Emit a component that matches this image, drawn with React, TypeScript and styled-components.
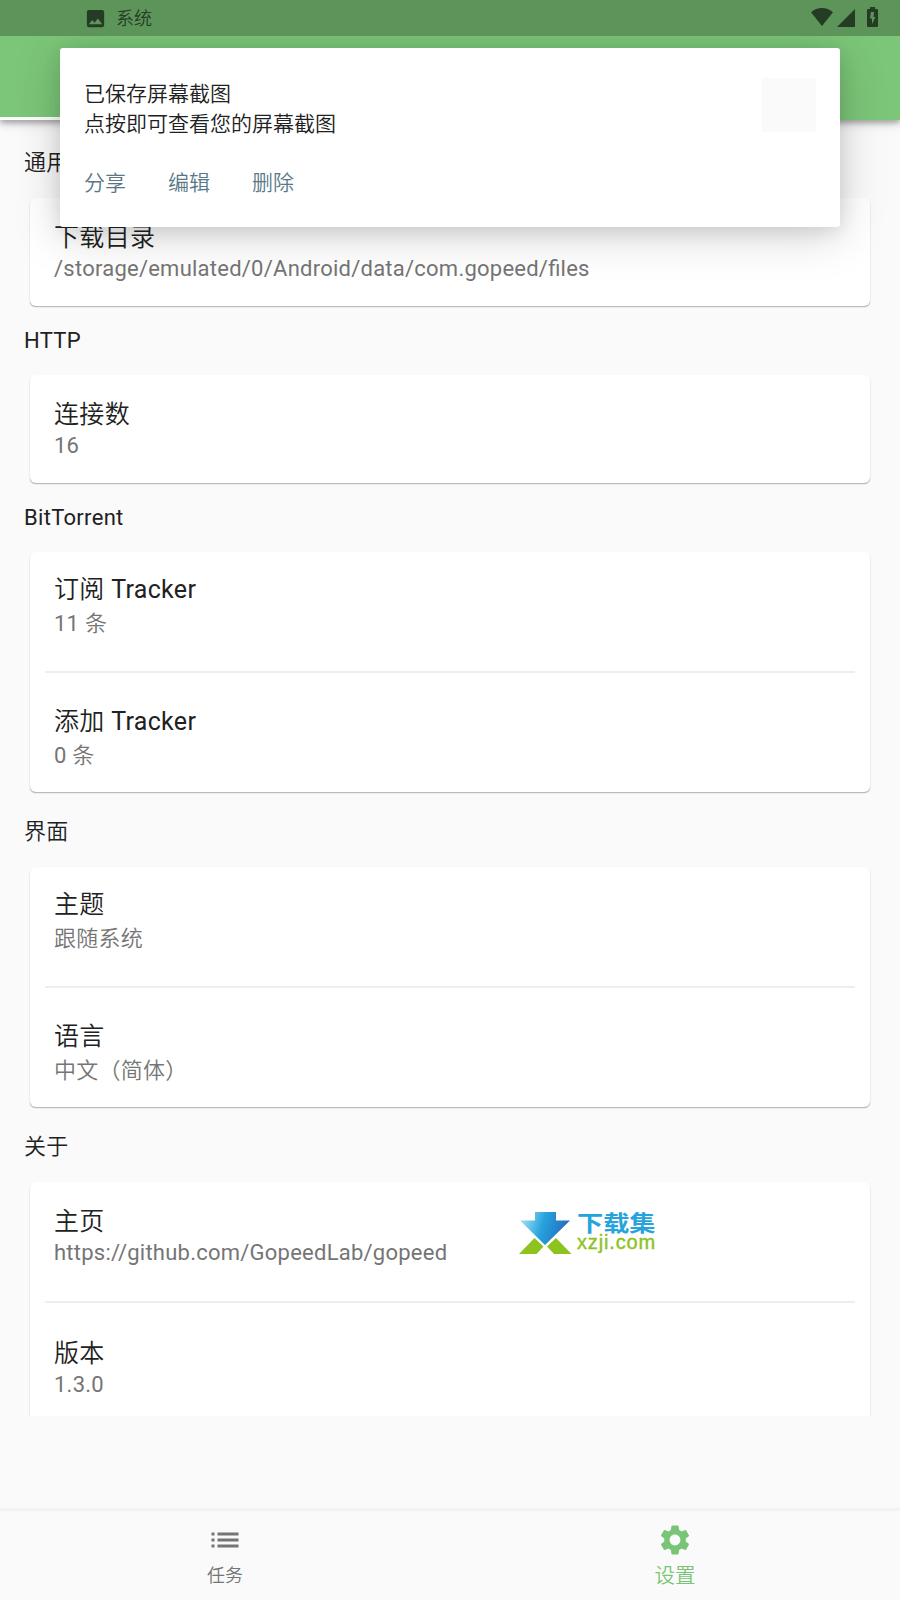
import React from 'react';
import styled, { createGlobalStyle } from 'styled-components';
import { MdImage, MdList, MdSettings } from 'react-icons/md';

const GlobalStyle = createGlobalStyle`
  * { box-sizing: border-box; }
  body {
    margin: 0;
    background: #fafafa;
    font-family: Roboto, "Noto Sans CJK SC", sans-serif;
  }
`;

const Screen = styled.div`
  position: relative;
  display: flex;
  flex-direction: column;
  width: 900px;
  height: 1600px;
  overflow: hidden;
  background: #fafafa;
  color: #212121;
`;

const StatusBar = styled.header`
  display: flex;
  flex: none;
  align-items: center;
  justify-content: space-between;
  height: 36px;
  padding: 0 22px 0 84px;
  background: #5c945a;
  color: #243c24;
  position: relative;
  z-index: 4;
`;

const StatusNote = styled.div`
  display: flex;
  align-items: center;
  gap: 9px;
  font-size: 18px;
  font-weight: 350;
  line-height: 37px;
  svg { width: 23px; height: 23px; }
`;

const StatusIcons = styled.div`
  display: flex;
  align-items: flex-end;
  height: 18px;
  svg { display: block; }
`;

const WifiIcon = styled.svg`
  margin-bottom: 1px;
`;

const SignalIcon = styled.svg`
  margin: 0 12px 0 4px;
`;

const AppBar = styled.div`
  display: flex;
  flex: none;
  align-items: flex-end;
  height: 84px;
  background: #7bc678;
  box-shadow: 0 3px 5px rgba(0, 0, 0, 0.26), 0 5px 10px rgba(0, 0, 0, 0.12);
  position: relative;
  z-index: 1;
`;

const TabIndicator = styled.span`
  width: 180px;
  height: 3px;
  background: #fff;
`;

const Content = styled.main`
  flex: none;
  height: 1296px;
  padding: 0 30px;
  overflow: hidden;
`;

const SectionTitle = styled.h2<{ $height: number; $cjk: boolean }>`
  display: flex;
  align-items: flex-end;
  height: ${(p) => p.$height}px;
  margin: 0 -6px;
  padding-bottom: ${(p) => (p.$cjk ? 20.5 : 19)}px;
  font-size: 22px;
  font-weight: ${(p) => (p.$cjk ? 350 : 400)};
  line-height: 30px;
  letter-spacing: 0.3px;
`;

const Card = styled.section`
  border-radius: 6px;
  background: #fff;
  box-shadow: 0 1.5px 1px -0.5px rgba(0, 0, 0, 0.2), 0 1px 2px rgba(0, 0, 0, 0.12);
`;

const Row = styled.div<{ $cjk?: boolean }>`
  height: 108px;
  padding: ${(p) => (p.$cjk ? 23 : 25)}px 24px 0;
`;

const RowTitle = styled.div`
  height: 30px;
  font-size: 25px;
  line-height: 30px;
  letter-spacing: 0.32px;
`;

const RowValue = styled.div<{ $cjk?: boolean }>`
  margin-top: ${(p) => (p.$cjk ? 4 : 1)}px;
  color: #757575;
  font-size: 22px;
  line-height: 30px;
  letter-spacing: 0.24px;
  font-feature-settings: "liga" 1;
`;

const Han = styled.span`
  font-weight: 350;
`;

const Divider = styled.hr`
  height: 2px;
  margin: 11px 15px;
  border: 0;
  background: #eee;
`;

const NavBar = styled.nav`
  display: flex;
  height: 92px;
  margin-top: auto;
  border-top: 3px solid #f3f3f3;
`;

const NavItem = styled.div<{ $active?: boolean }>`
  display: flex;
  flex: 1;
  flex-direction: column;
  align-items: center;
  padding-top: 11px;
  color: ${(p) => (p.$active ? '#79c576' : '#757575')};
  font-size: ${(p) => (p.$active ? 20.5 : 18)}px;
  font-weight: 350;
  line-height: 36px;
  svg { width: 36px; height: 36px; flex: none; }
`;

const Popup = styled.aside`
  position: absolute;
  z-index: 3;
  top: 48px;
  left: 60px;
  display: flex;
  justify-content: space-between;
  width: 780px;
  height: 179px;
  padding: 30px 24px 0;
  border-radius: 3px;
  background: #fff;
  box-shadow: 0 8px 48px rgba(0, 0, 0, 0.18), 0 4px 18px rgba(0, 0, 0, 0.1);
`;

const PopupText = styled.div`
  padding-top: 1px;
  font-size: 21px;
  font-weight: 350;
  line-height: 30px;
`;

const Actions = styled.div`
  display: flex;
  gap: 42px;
  margin-top: 29px;
  color: #587888;
`;

const Preview = styled.div`
  width: 54px;
  height: 54px;
  background: #fafafa;
`;

const Watermark = styled.div`
  position: absolute;
  z-index: 2;
  top: 1209px;
  left: 518px;
  display: flex;
  gap: 5px;
`;

const Brand = styled.div`
  width: 80px;
  padding-top: 4px;
`;

const BrandName = styled.div`
  height: 21px;
  color: #26a3dc;
  font-size: 22px;
  font-weight: 700;
  line-height: 21px;
  white-space: nowrap;
  transform: scaleX(1.19);
  transform-origin: left;
`;

const BrandSite = styled.div`
  color: #8dc21f;
  font-family: "Liberation Sans", sans-serif;
  font-size: 20px;
  line-height: 17px;
  letter-spacing: 0.85px;
  -webkit-text-stroke: 0.4px #8dc21f;
`;

type Item = { title: string; value: string };
type Section = { name: string; height: number; items: Item[] };

const sections: Section[] = [
  { name: '通用', height: 78, items: [{ title: '下载目录', value: '/storage/emulated/0/Android/data/com.gopeed/files' }] },
  { name: 'HTTP', height: 69, items: [{ title: '连接数', value: '16' }] },
  { name: 'BitTorrent', height: 69, items: [{ title: '订阅 Tracker', value: '11 条' }, { title: '添加 Tracker', value: '0 条' }] },
  { name: '界面', height: 75, items: [{ title: '主题', value: '跟随系统' }, { title: '语言', value: '中文（简体）' }] },
  { name: '关于', height: 75, items: [{ title: '主页', value: 'https://github.com/GopeedLab/gopeed' }, { title: '版本', value: '1.3.0' }] },
];

const hasCjk = (s: string) => /[\u4e00-\u9fff]/.test(s);

function MixedText({ text }: { text: string }) {
  const runs = text.split(/([\u4e00-\u9fff（）]+)/).filter(Boolean);
  return <>{runs.map((run, i) => (hasCjk(run) ? <Han key={i}>{run}</Han> : run))}</>;
}

function SettingRow({ title, value }: Item) {
  const cjk = hasCjk(value);
  return (
    <Row $cjk={cjk}>
      <RowTitle><MixedText text={title} /></RowTitle>
      <RowValue $cjk={cjk}><MixedText text={value} /></RowValue>
    </Row>
  );
}

export default function App() {
  return (
    <Screen>
      <GlobalStyle />
      <StatusBar>
        <StatusNote>
          <MdImage />
          系统
        </StatusNote>
        <StatusIcons>
          <WifiIcon width="22" height="18" viewBox="0 0 22 18" fill="currentColor">
            <path d="M11 18 0 4.3C3 1.5 7 0 11 0s8 1.5 11 4.3z" />
          </WifiIcon>
          <SignalIcon width="18" height="18" viewBox="0 0 18 18" fill="currentColor">
            <path d="M0 18 18 0v18z" />
          </SignalIcon>
          <svg width="11" height="20" viewBox="0 0 11 20" fill="currentColor" fillRule="evenodd">
            <path d="M3 0h5v2h2q1 0 1 1v16q0 1-1 1H1q-1 0-1-1V3q0-1 1-1h2zM7 5H4L3 11.500h2V17l3.500-7H6.500z" />
          </svg>
        </StatusIcons>
      </StatusBar>
      <AppBar>
        <TabIndicator />
      </AppBar>
      <Content>
        {sections.map((s) => (
          <React.Fragment key={s.name}>
            <SectionTitle $height={s.height} $cjk={hasCjk(s.name)}>{s.name}</SectionTitle>
            <Card>
              {s.items.map((item, i) => (
                <React.Fragment key={item.title}>
                  {i > 0 && <Divider />}
                  <SettingRow {...item} />
                </React.Fragment>
              ))}
            </Card>
          </React.Fragment>
        ))}
      </Content>
      <NavBar>
        <NavItem>
          <MdList />
          任务
        </NavItem>
        <NavItem $active>
          <MdSettings />
          设置
        </NavItem>
      </NavBar>
      <Popup>
        <PopupText>
          <div>已保存屏幕截图</div>
          <div>点按即可查看您的屏幕截图</div>
          <Actions>
            <span>分享</span>
            <span>编辑</span>
            <span>删除</span>
          </Actions>
        </PopupText>
        <Preview />
      </Popup>
      <Watermark>
        <svg width="54" height="46" viewBox="0 0 54 46">
          <defs>
            <linearGradient id="arrow" x1="0" y1="0.3" x2="1" y2="0.5">
              <stop offset="0" stopColor="#a5e0f5" />
              <stop offset="0.45" stopColor="#26a3dd" />
              <stop offset="1" stopColor="#2468b8" />
            </linearGradient>
          </defs>
          <path d="M17 3h21v8.500h14L27 36 2 11.500h15z" fill="url(#arrow)" />
          <path d="M1 45 16.500 29l9 8.500-7 7.500zM53.500 45 38 29l-9 8.500 7 7.500z" fill="#8dc21f" />
        </svg>
        <Brand>
          <BrandName>下载集</BrandName>
          <BrandSite>xzji.com</BrandSite>
        </Brand>
      </Watermark>
    </Screen>
  );
}
